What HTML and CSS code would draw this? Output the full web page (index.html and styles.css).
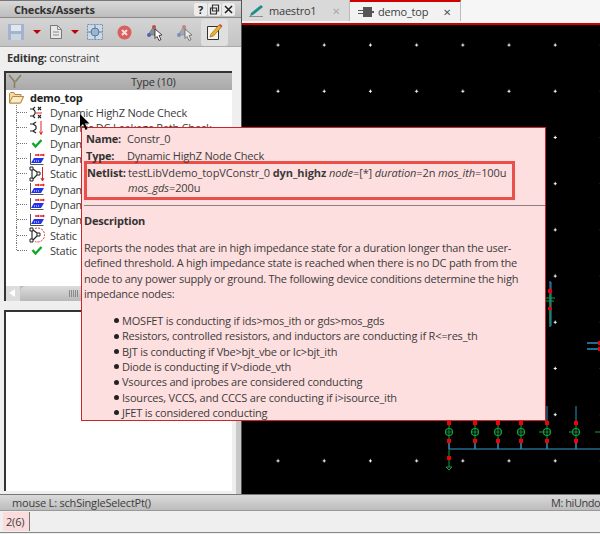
FILE: index.html
```html
<!DOCTYPE html>
<html lang="en">
<head>
  <meta charset="UTF-8" />
  <title>Checks/Asserts</title>
  <link rel="stylesheet" href="styles.css">
</head>
<body>
  <svg class="defs" width="0" height="0">
    <symbol id="i-highz" viewBox="0 0 14 14">
      <path d="M0 3h3l2-2M3 3l2 2M0 10h3l2-2M3 10l2 2M5 5v3" fill="none" stroke="#222" stroke-width="1.1"/>
      <path d="M5 7h7" stroke="#e02020" stroke-width="1"/>
      <path d="M8 1l3 3M11 1l-3 3M8 9l3 3M11 9l-3 3" stroke="#222" stroke-width="1.1"/>
    </symbol>
    <symbol id="i-leak" viewBox="0 0 14 14">
      <path d="M0 3h3l3-2M3 3l3 2M0 10h3l3-2M3 10l3 2M6 5v3" fill="none" stroke="#222" stroke-width="1.2"/>
      <path d="M11 0v13M9.5 10.5L11 13.5l1.5-3" fill="none" stroke="#e02020" stroke-width="1"/>
    </symbol>
    <symbol id="i-check" viewBox="0 0 14 14">
      <path d="M2.500 7l3 3.500L11.500 4" fill="none" stroke="#12a52a" stroke-width="2.400"/>
    </symbol>
    <symbol id="i-wave" viewBox="0 0 16 14">
      <path d="M1.500 1v11.500h13" fill="none" stroke="#555" stroke-width="1"/>
      <path d="M5 6h10l-3 5H2z" fill="#2233ee"/>
      <path d="M5 9h5" stroke="#fff" stroke-dasharray="1 1"/>
      <path d="M6 3h3.500M11 3h3.500" stroke="#e02020" stroke-width="1.400"/>
      <path d="M9 1.500L11 3 9 4.500zM14 1.500L16 3l-2 1.500z" fill="#e02020"/>
    </symbol>
    <symbol id="i-static" viewBox="0 0 16 16">
      <path d="M1 1h3v3H1zM1 12h3v3H1zM8 6h3v3H8z" fill="none" stroke="#222"/>
      <path d="M4 3l4 3M4 13l4-4M3 4v8" fill="none" stroke="#222" stroke-width="1.100"/>
      <path d="M13.500 1v14M12 12l1.500 3 1.500-3" fill="none" stroke="#e02020"/>
    </symbol>
    <symbol id="i-static2" viewBox="0 0 16 16">
      <path d="M1 1h3v3H1zM1 12h3v3H1zM8 6h3v3H8z" fill="none" stroke="#222"/>
      <path d="M4 3l4 3M4 13l4-4M3 4v8" fill="none" stroke="#222" stroke-width="1.100"/>
      <path d="M6 1.500A7 7 0 1 1 6 14.500" fill="none" stroke="#e02020" stroke-dasharray="2 1.200"/>
    </symbol>
    <symbol id="i-probe" viewBox="0 0 18 18">
      <path d="M9 3L3 12h11z" fill="#8a8f98" stroke="#667" stroke-width=".6"/>
      <circle cx="9" cy="4" r="2" fill="#c0504a"/>
      <circle cx="4" cy="12" r="2" fill="#4a68a8"/>
      <circle cx="11" cy="12" r="2" fill="#9a8a5a"/>
      <path d="M10 6l7 6-3 .5 2 4-2 1-2-4-2 2z" fill="#fff" stroke="#222" stroke-width=".8"/>
    </symbol>
  </svg>

  <div class="app">
    <div class="main">
      <section class="dock">
        <header class="dock-title">
          <span class="dock-name">Checks/Asserts</span>
          <span class="win-btns">
            <span class="win-btn">?</span>
            <span class="win-btn">
              <svg width="11" height="11" viewBox="0 0 11 11"><path d="M3.500 1h6v6h-6zM1.500 4h6v6h-6z" fill="#eee" stroke="#333" stroke-width="1.200"/></svg>
            </span>
            <span class="win-btn">
              <svg width="11" height="11" viewBox="0 0 11 11"><path d="M2 2l7 7M9 2l-7 7" stroke="#222" stroke-width="1.600"/></svg>
            </span>
          </span>
        </header>

        <div class="toolbar">
          <svg class="tool tool-save" width="16" height="16" viewBox="0 0 16 16">
            <path d="M0 0h16v16H0z" fill="#a3b4cf"/>
            <path d="M3 1h10v6H3z" fill="#e2e6ee"/>
            <path d="M3 10h10v6H3z" fill="#cdd4e0"/>
          </svg>
          <span class="drop"></span>
          <svg class="tool tool-doc" width="12" height="14" viewBox="0 0 12 14">
            <path d="M.5.5h7l4 4v9H.5z" fill="#e8e8e8" stroke="#777"/>
            <path d="M7.500.5v4h4M3 7h6M3 10h6" fill="none" stroke="#888"/>
          </svg>
          <span class="drop"></span>
          <svg class="tool tool-fit" width="16" height="16" viewBox="0 0 16 16">
            <path d="M.5.5h15v15H.5z" fill="#cfd9e6" stroke="#6f8fb0" stroke-dasharray="2 1"/>
            <circle cx="8" cy="8" r="4" fill="#9bb4d0" stroke="#5b7ea5"/>
            <path d="M8 1v4M8 11v4M1 8h4M11 8h4" stroke="#5b7ea5"/>
          </svg>
          <svg class="tool tool-stop" width="15" height="15" viewBox="0 0 15 15">
            <circle cx="7.500" cy="7.500" r="7" fill="#d9605f"/>
            <path d="M5 5l5 5M10 5l-5 5" stroke="#f6dede" stroke-width="2"/>
          </svg>
          <svg class="tool tool-probe" width="18" height="18"><use href="#i-probe"/></svg>
          <svg class="tool tool-probe2" width="18" height="18"><use href="#i-probe"/></svg>
          <span class="tool-active">
            <svg width="16" height="16" viewBox="0 0 16 16">
              <path d="M.5 2.500h11v13H.5z" fill="#f4f4ec" stroke="#333"/>
              <path d="M3 13l1-3 8-9 2.500 2-8 9z" fill="#e8b030" stroke="#8a5a10" stroke-width=".6"/>
              <path d="M12 1l2.500 2 1-1.200L13 0z" fill="#d84040"/>
            </svg>
          </span>
        </div>

        <div class="editing"><b>Editing:</b> constraint</div>

        <div class="tree-pane">
          <div class="tree-head">
            <svg width="14" height="15" viewBox="0 0 14 15"><path d="M1 1l5.500 6.500V14M13 1L7.500 7.500" fill="none" stroke="#8c7f5c" stroke-width="1.600"/></svg>
            <span class="tree-head-label">Type (10)</span>
          </div>
          <div class="tree-root">
            <svg width="15" height="13" viewBox="0 0 15 13">
              <path d="M.5 2.500V12h11l3-6.500H12V3.500H6L5 1.500H1.500z" fill="#f6d9a6" stroke="#b98a3e"/>
              <path d="M.5 12l3-6.500h11L11.500 12z" fill="#fbeacb" stroke="#b98a3e"/>
            </svg>
            <b>demo_top</b>
          </div>
          <div class="tree-row"><span class="link"></span><svg class="ico" width="14" height="14"><use href="#i-highz"/></svg>Dynamic HighZ Node Check</div>
          <div class="tree-row"><span class="link"></span><svg class="ico" width="14" height="14"><use href="#i-leak"/></svg>Dynamic DC Leakage Path Check</div>
          <div class="tree-row"><span class="link"></span><svg class="ico" width="14" height="14"><use href="#i-check"/></svg>Dynamic</div>
          <div class="tree-row"><span class="link"></span><svg class="ico" width="16" height="14"><use href="#i-wave"/></svg>Dynamic</div>
          <div class="tree-row"><span class="link"></span><svg class="ico" width="16" height="16"><use href="#i-static"/></svg>Static</div>
          <div class="tree-row"><span class="link"></span><svg class="ico" width="16" height="14"><use href="#i-wave"/></svg>Dynamic</div>
          <div class="tree-row"><span class="link"></span><svg class="ico" width="16" height="14"><use href="#i-wave"/></svg>Dynamic</div>
          <div class="tree-row"><span class="link"></span><svg class="ico" width="16" height="14"><use href="#i-wave"/></svg>Dynamic</div>
          <div class="tree-row"><span class="link"></span><svg class="ico" width="16" height="16"><use href="#i-static2"/></svg>Static</div>
          <div class="tree-row tree-row-last"><span class="link"></span><svg class="ico" width="14" height="14"><use href="#i-check"/></svg>Static</div>
          <div class="hscroll">
            <span class="hscroll-btn"></span>
            <span class="hscroll-thumb"><span class="hscroll-grip"></span></span>
          </div>
        </div>

        <div class="detail-pane"></div>
      </section>

      <section class="editor">
        <div class="tabs">
          <div class="tab">
            <svg width="16" height="12" viewBox="0 0 16 12"><path d="M1 11l3-1L14 2l-2-2L2 8z" fill="#1d8f88"/><path d="M0 12h14" stroke="#444"/></svg>
            <span class="tab-label">maestro1</span>
            <span class="tab-x tab-x-dim">✕</span>
          </div>
          <div class="tab tab-on">
            <svg width="16" height="10" viewBox="0 0 16 10"><path d="M5 0h9v10H5zM0 3h5v1H0zM0 6h5v1H0zM14 4h2v2h-2z" fill="#555"/></svg>
            <span class="tab-label">demo_top</span>
            <span class="tab-x">✕</span>
          </div>
        </div>
        <svg class="canvas" viewBox="0 1 358 469" width="358" height="469">
          <defs>
            <pattern id="grid" width="46.200" height="46.200" patternUnits="userSpaceOnUse" patternTransform="translate(13 -2)">
              <path d="M21.500 23h3M23 21.500v3" stroke="#fff" stroke-width="1"/>
            </pattern>
            <g id="mos">
              <path d="M0-9v18" stroke="#12a040" stroke-width="1"/>
              <circle r="3.500" fill="none" stroke="#12a040" stroke-width="1.200"/>
              <path d="M-3 0h6" stroke="#12a040" stroke-width=".8"/>
              <path d="M-2-11h4v4h-4zM-2 7h4v4h-4z" fill="#f00000"/>
            </g>
          </defs>
          <rect y="1" width="358" height="469" fill="url(#grid)"/>
          <path d="M307 258h2v44h-2M308 258v44" fill="none" stroke="#2f8fc0" stroke-width="1"/>
          <path d="M308 270v30" stroke="#12a040"/>
          <path d="M303 274h10M304 277h8" stroke="#12a040" stroke-width="1.200"/>
          <path d="M306 265h4v4h-4zM306 283h4v3h-4z" fill="#f00000"/>
          <path d="M345 319h13M345 325h13" stroke="#2f8fc0" stroke-width="1.500"/>
          <path d="M356 317h2v4h-2zM356 323h2v4h-2z" fill="#f00000"/>
          <path d="M207 425h151" stroke="#3a9bd0" stroke-width="1"/>
          <path d="M207 417v8M233 417v8M256 417v8M279 417v8M305 417v8M334 417v8" stroke="#2f8fc0" stroke-width="1.500"/>
          <path d="M305 382v18M334 382v18" stroke="#2f8fc0" stroke-width="1"/>
          <use href="#mos" x="207" y="408"/>
          <use href="#mos" x="233" y="408"/>
          <use href="#mos" x="256" y="408"/>
          <use href="#mos" x="279" y="408"/>
          <use href="#mos" x="305" y="408"/>
          <use href="#mos" x="334" y="408"/>
          <path d="M297 408h5M327 408h4M353 408h5" stroke="#12a040" stroke-width="1.200"/>
          <path d="M207 425v18" stroke="#12a040"/>
          <path d="M205 432h4v4h-4z" fill="#f00000"/>
          <path d="M204 443h6l-3 3z" fill="none" stroke="#12a040"/>
        </svg>
      </section>
    </div>

    <div class="statusbar">
      <span class="status-left">mouse L: schSingleSelectPt()</span>
      <span class="status-right">M: hiUndo</span>
    </div>
    <div class="msgbar"><span class="msg-cell">2(6)</span></div>
  </div>

  <div class="tip">
    <div class="tip-row"><b class="tip-key">Name:</b>Constr_0</div>
    <div class="tip-row"><b class="tip-key">Type:</b>Dynamic HighZ Node Check</div>
    <div class="tip-net">
      <b class="tip-key-net">Netlist:</b>
      <div class="tip-net-text">testLibVdemo_topVConstr_0 <b>dyn_highz</b> <i>node</i>=[*] <i>duration</i>=2n <i>mos_ith</i>=100u<br><i>mos_gds</i>=200u</div>
    </div>
    <hr class="tip-rule">
    <div class="tip-body">
      <h4 class="tip-title">Description</h4>
      <p class="tip-para">Reports the nodes that are in high impedance state for a duration longer than the user-defined threshold. A high impedance state is reached when there is no DC path from the node to any power supply or ground. The following device conditions determine the high impedance nodes:</p>
      <ul class="tip-list">
        <li>MOSFET is conducting if ids&gt;mos_ith or gds&gt;mos_gds</li>
        <li>Resistors, controlled resistors, and inductors are conducting if R&lt;=res_th</li>
        <li>BJT is conducting if Vbe&gt;bjt_vbe or Ic&gt;bjt_ith</li>
        <li>Diode is conducting if V&gt;diode_vth</li>
        <li>Vsources and iprobes are considered conducting</li>
        <li>Isources, VCCS, and CCCS are conducting if i&gt;isource_ith</li>
        <li>JFET is considered conducting</li>
      </ul>
    </div>
  </div>

  <svg class="cursor" width="12" height="17" viewBox="0 0 12 17"><path d="M0 0v13l3-3 2.500 6 2-1-2.500-5.500h4.500z" fill="#000"/></svg>
</body>
</html>
```

FILE: styles.css
```css
html, body {
  margin: 0;
  padding: 0;
}

body {
  width: 600px;
  height: 534px;
  overflow: hidden;
  position: relative;
  font-family: "Open Sans", sans-serif;
  font-size: 11px;
  letter-spacing: -0.2px;
  color: #3c3c3c;
  background-color: #efefef;
}

.defs {
  position: absolute;
}

.app {
  display: flex;
  flex-direction: column;
  height: 534px;
}

.main {
  display: flex;
  height: 494px;
}

/* left dock */
.dock {
  width: 242px;
  flex: none;
  box-sizing: border-box;
  border-right: 1px solid #555;
  background: linear-gradient(#c8c8c8, #c8c8c8) no-repeat 236px 280px / 5px 214px, #efefef;
  display: flex;
  flex-direction: column;
}

.dock-title {
  height: 18px;
  flex: none;
  box-sizing: border-box;
  display: flex;
  align-items: center;
  justify-content: space-between;
  padding: 0 6px 0 14px;
  border-top: 1px solid #777;
  border-bottom: 1px solid #8a8a8a;
  background: linear-gradient(#d8d8d8, #bdbdbd);
}

.dock-name {
  font-weight: bold;
  color: #333;
}

.win-btns {
  display: flex;
  gap: 1px;
}

.win-btn {
  width: 13px;
  height: 13px;
  display: flex;
  align-items: center;
  justify-content: center;
  border-radius: 2px;
  background-color: #ececec;
  font-weight: bold;
  color: #222;
}

.toolbar {
  height: 29px;
  flex: none;
  box-sizing: border-box;
  display: flex;
  align-items: center;
  padding: 0 4px 0 8px;
  border-bottom: 1px solid #aaa;
  background: linear-gradient(#d4d4d4, #c4c4c4);
}

.tool {
  flex: none;
}

.drop {
  width: 0;
  height: 0;
  flex: none;
  margin: 0 9px;
  border-left: 4px solid transparent;
  border-right: 4px solid transparent;
  border-top: 4px solid #c00000;
}

.tool-fit {
  margin-left: -1px;
}

.tool-stop {
  margin-left: 14px;
}

.tool-probe {
  margin-left: 13px;
}

.tool-probe2 {
  margin-left: 12px;
  opacity: 0.6;
}

.tool-active {
  width: 27px;
  height: 27px;
  margin-left: 8px;
  display: flex;
  align-items: center;
  justify-content: center;
  border-radius: 3px;
  background-color: #dfdfdf;
}

.editing {
  height: 24px;
  flex: none;
  box-sizing: border-box;
  padding: 3px 0 0 7px;
  line-height: 15px;
}

.editing b {
  color: #333;
}

.tree-pane {
  width: 228px;
  height: 230px;
  flex: none;
  margin-left: 4px;
  box-sizing: border-box;
  border-top: 2px solid #333;
  border-left: 2px solid #333;
  background-color: #fff;
  position: relative;
  overflow: hidden;
}

.tree-head {
  height: 17px;
  display: flex;
  align-items: center;
  padding-left: 2px;
  background: linear-gradient(#bcbcbc, #a9a9a9);
  color: #333;
}

.tree-head-label {
  margin-left: 109px;
}

.tree-root {
  height: 15px;
  display: flex;
  align-items: center;
  gap: 6px;
  padding-left: 3px;
  color: #222;
}

.tree-row {
  height: 15.300px;
  margin-left: 10px;
  display: flex;
  align-items: center;
  border-left: 1px dotted #777;
  white-space: nowrap;
  position: relative;
}

.tree-row-last {
  border-left-color: transparent;
}

.tree-row-last::before {
  content: "";
  position: absolute;
  left: -1px;
  top: 0;
  height: 50%;
  border-left: 1px dotted #777;
}

.link {
  width: 10px;
  flex: none;
  border-top: 1px dotted #777;
}

.ico {
  width: 16px;
  flex: none;
  margin: 0 5px 0 2px;
}

.hscroll {
  position: absolute;
  left: 0;
  right: 0;
  bottom: 0;
  height: 15px;
  display: flex;
  background-color: #bdbdbd;
}

.hscroll-btn {
  width: 14px;
  flex: none;
  box-sizing: border-box;
  background-color: #dcdcdc;
  position: relative;
}

.hscroll-btn::after {
  content: "";
  position: absolute;
  left: 3px;
  top: 3px;
  border-top: 4px solid transparent;
  border-bottom: 4px solid transparent;
  border-right: 6px solid #fff;
}

.hscroll-thumb {
  width: 180px;
  flex: none;
  display: flex;
  align-items: center;
  padding-left: 49px;
  box-sizing: border-box;
  border-radius: 6px 0 0 6px;
  background: linear-gradient(#dcdcdc, #b8b8b8);
}

.hscroll-grip {
  width: 10px;
  height: 7px;
  background: repeating-linear-gradient(to right, #8a8a8a 0 1px, transparent 1px 2px);
}

.detail-pane {
  width: 228px;
  height: 181px;
  flex: none;
  margin: 9px 0 0 4px;
  box-sizing: border-box;
  border-top: 2px solid #333;
  border-left: 2px solid #333;
  background-color: #fff;
}

/* schematic editor */
.editor {
  flex: 1;
  display: flex;
  flex-direction: column;
  min-width: 0;
}

.tabs {
  height: 25px;
  flex: none;
  box-sizing: border-box;
  display: flex;
  border-bottom: 2px solid #d00000;
  background-color: #f6f6f6;
}

.tab {
  width: 108px;
  height: 21px;
  box-sizing: border-box;
  display: flex;
  align-items: center;
  gap: 4px;
  padding: 0 9px 0 7px;
  border-right: 1px solid #bbb;
  background-color: #d9d9d9;
}

.tab-on {
  width: 111px;
  padding-left: 8px;
  border-top: 2px solid #d00000;
  background-color: #f2f2f2;
}

.tab-label {
  flex: 1;
}

.tab-x {
  font-size: 10px;
  color: #555;
}

.tab-x-dim {
  color: #aaa;
}

.canvas {
  display: block;
  flex: none;
  background-color: #000;
}

/* bottom bars */
.statusbar {
  height: 17px;
  flex: none;
  box-sizing: border-box;
  display: flex;
  justify-content: space-between;
  align-items: center;
  padding-left: 12px;
  border-top: 1px solid #777;
  border-bottom: 1px solid #999;
  background: linear-gradient(#dadada, #bcbcbc);
  white-space: nowrap;
  overflow: hidden;
}

.status-right {
  width: 49px;
  flex: none;
  letter-spacing: -0.45px;
}

.msgbar {
  flex: 1;
  box-sizing: border-box;
  margin-bottom: 1px;
  padding: 1px 0 1px 3px;
  border-bottom: 1px solid #888;
  background-color: #efefef;
  display: flex;
}

.msg-cell {
  width: 27px;
  box-sizing: border-box;
  padding-left: 3px;
  line-height: 19px;
  border-right: 1px solid #777;
  background-color: #fbdcdc;
}

/* hover tooltip */
.tip {
  position: absolute;
  left: 81px;
  top: 127px;
  width: 465px;
  height: 294px;
  box-sizing: border-box;
  border: 1px solid #c8282c;
  background-color: #fedfdf;
  overflow: hidden;
  line-height: 15.300px;
}

.tip-row {
  display: flex;
  height: 17px;
  align-items: center;
  padding-left: 4px;
}

.tip-row:first-child {
  margin-top: 2px;
}

.tip-key {
  width: 41px;
  flex: none;
  color: #333;
}

.tip-net {
  width: 431px;
  height: 39px;
  box-sizing: border-box;
  margin: -3px 0 0 2px;
  padding: 1px 0 0 0;
  border: 3px solid #e9504a;
  display: flex;
}

.tip-key-net {
  width: 41px;
  flex: none;
  color: #333;
}

.tip-net-text {
  letter-spacing: -0.1px;
}

.tip-rule {
  height: 1px;
  margin: 5px 0 0 2px;
  border: none;
  background-color: #8d7f7f;
}

.tip-body {
  padding: 0 18px 0 2px;
}

.tip-title {
  margin: 7px 0 12px;
  font-size: 11px;
  line-height: 15px;
  color: #333;
}

.tip-para {
  margin: 0;
  letter-spacing: -0.23px;
}

.tip-list {
  margin: 12px 0 0;
  padding: 0 0 0 30px;
  list-style: none;
}

.tip-list li {
  display: flex;
  align-items: center;
  gap: 3px;
}

.tip-list li::before {
  content: "";
  width: 5px;
  height: 5px;
  flex: none;
  border-radius: 50%;
  background-color: #222;
}

.cursor {
  position: absolute;
  left: 80px;
  top: 114px;
}
```
